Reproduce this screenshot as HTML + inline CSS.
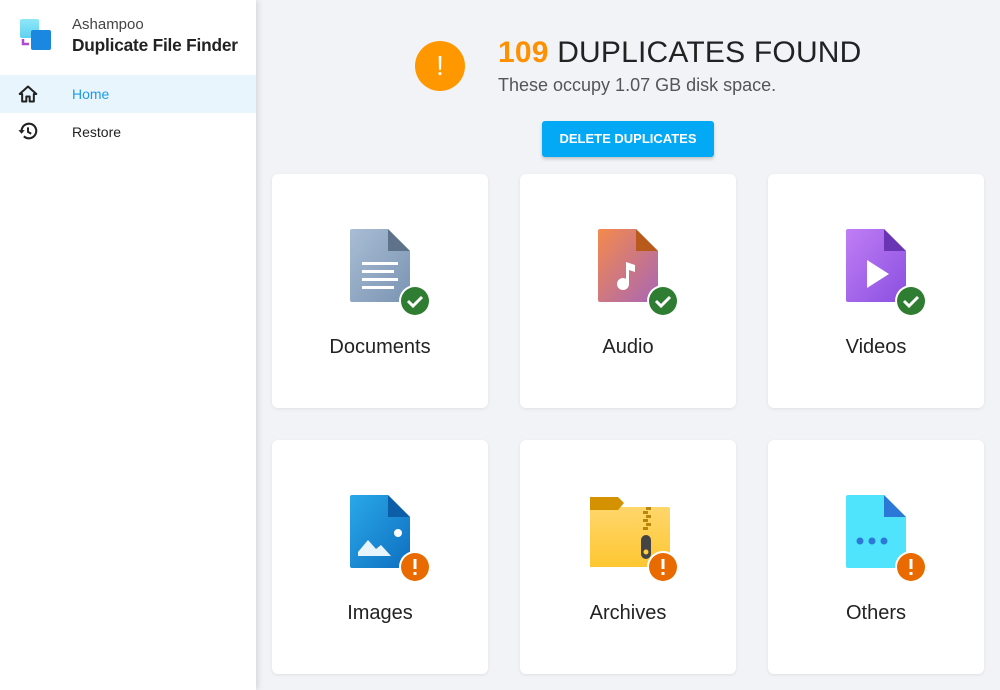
<!DOCTYPE html><html><head><meta charset="utf-8"><style>
*{margin:0;padding:0;box-sizing:border-box}
body{width:1000px;height:690px;overflow:hidden;font-family:"Liberation Sans",sans-serif;background:#f2f3f7;position:relative}
.side{position:absolute;left:0;top:0;width:256px;height:690px;background:#fff;box-shadow:2px 0 6px rgba(0,0,0,.12)}
.card{position:absolute;width:216px;height:234px;background:#fff;border-radius:6px;box-shadow:0 1px 3px rgba(0,0,0,.08)}
.card .lbl{position:absolute;left:0;right:0;top:162px;text-align:center;font-size:20px;color:#222}
.card svg{position:absolute;left:70px;top:50px}
</style></head><body>
<div class="side">
<svg style="position:absolute;left:19px;top:18px" width="34" height="34" viewBox="0 0 34 34"><defs><linearGradient id="a" x1="0" y1="0" x2="0" y2="1"><stop offset="0" stop-color="#8ee8f8"/><stop offset="1" stop-color="#5fd0f0"/></linearGradient></defs><rect x="1" y="1" width="19" height="19" rx="2" fill="url(#a)"/><rect x="12" y="12" width="20" height="20" rx="2" fill="#1a88e0"/><path d="M4 21v5h6" stroke="#b04ad0" stroke-width="2.5" fill="none"/></svg>
<div style="position:absolute;left:72px;top:16px;font-size:15px;color:#444">Ashampoo</div>
<div style="position:absolute;left:72px;top:35px;font-size:17.3px;color:#222;font-weight:bold;letter-spacing:-.2px">Duplicate File Finder</div>
<div style="position:absolute;left:0;top:75px;width:256px;height:38px;background:#e8f5fc"></div>
<svg style="position:absolute;left:18px;top:84px" width="20" height="20" viewBox="0 0 24 24"><path d="M12 3L2 12h3v9h5v-6h4v6h5v-9h3z" fill="none" stroke="#222" stroke-width="2.4" stroke-linejoin="round"/></svg>
<div style="position:absolute;left:72px;top:86px;font-size:14px;color:#1e9be8">Home</div>
<svg style="position:absolute;left:17px;top:120px" width="22" height="22" viewBox="0 0 24 24"><path d="M5 12a8 8 0 1 1 2.5 5.8" fill="none" stroke="#222" stroke-width="2.3"/><path d="M1.5 11h7l-3.5 4z" fill="#222"/><path d="M12 8v5l3.5 2" fill="none" stroke="#222" stroke-width="2.2"/></svg>
<div style="position:absolute;left:72px;top:124px;font-size:14px;color:#222">Restore</div>
</div>
<div style="position:absolute;left:415px;top:41px;width:50px;height:50px;border-radius:50%;background:#ff9800;color:#fff;font-size:28px;text-align:center;line-height:50px">!</div>
<div style="position:absolute;left:498px;top:36px;font-size:30px;color:#222;letter-spacing:.2px"><b style="color:#ff9100">109</b> DUPLICATES FOUND</div>
<div style="position:absolute;left:498px;top:75px;font-size:18px;color:#555">These occupy 1.07 GB disk space.</div>
<div style="position:absolute;left:542px;top:121px;width:172px;height:36px;background:#03a9f4;border-radius:3px;color:#fff;font-size:13px;font-weight:bold;text-align:center;line-height:36px;box-shadow:0 2px 3px rgba(0,0,0,.2)">DELETE DUPLICATES</div>

<div class="card" style="left:272px;top:174px"><svg width="90" height="95" viewBox="0 0 90 95"><defs><linearGradient id="d" x1="0" y1="0" x2="1" y2="1"><stop offset="0" stop-color="#a9bdd4"/><stop offset="1" stop-color="#7a94b3"/></linearGradient></defs><path d="M8 5h38l22 22v49a2 2 0 0 1-2 2H10a2 2 0 0 1-2-2V7a2 2 0 0 1 2-2z" fill="url(#d)"/><path d="M46 5l22 22H46z" fill="#5e738a"/><rect x="20" y="38" width="36" height="3" fill="#fff"/><rect x="20" y="46" width="32" height="3" fill="#fff"/><rect x="20" y="54" width="36" height="3" fill="#fff"/><rect x="20" y="62" width="32" height="3" fill="#fff"/><circle cx="73" cy="77" r="16" fill="#fff"/><circle cx="73" cy="77" r="14" fill="#2e7d32"/><path d="M66 77l5 5 9-9" stroke="#fff" stroke-width="3" fill="none"/></svg><div class="lbl">Documents</div></div>

<div class="card" style="left:520px;top:174px"><svg width="90" height="95" viewBox="0 0 90 95"><defs><linearGradient id="au" x1="0" y1="0" x2="1" y2="1"><stop offset="0" stop-color="#f48a4c"/><stop offset="1" stop-color="#a866b5"/></linearGradient></defs><path d="M8 5h38l22 22v49a2 2 0 0 1-2 2H10a2 2 0 0 1-2-2V7a2 2 0 0 1 2-2z" fill="url(#au)"/><path d="M46 5l22 22H46z" fill="#b85a1c"/><circle cx="33" cy="60" r="6" fill="#fff"/><path d="M36 60V38l9 3v7l-6-2v14z" fill="#fff"/><circle cx="73" cy="77" r="16" fill="#fff"/><circle cx="73" cy="77" r="14" fill="#2e7d32"/><path d="M66 77l5 5 9-9" stroke="#fff" stroke-width="3" fill="none"/></svg><div class="lbl">Audio</div></div>

<div class="card" style="left:768px;top:174px"><svg width="90" height="95" viewBox="0 0 90 95"><defs><linearGradient id="v" x1="0" y1="0" x2="1" y2="1"><stop offset="0" stop-color="#c07ef5"/><stop offset="1" stop-color="#8a4fe0"/></linearGradient></defs><path d="M8 5h38l22 22v49a2 2 0 0 1-2 2H10a2 2 0 0 1-2-2V7a2 2 0 0 1 2-2z" fill="url(#v)"/><path d="M46 5l22 22H46z" fill="#6a35b5"/><path d="M29 36l22 14-22 14z" fill="#fff"/><circle cx="73" cy="77" r="16" fill="#fff"/><circle cx="73" cy="77" r="14" fill="#2e7d32"/><path d="M66 77l5 5 9-9" stroke="#fff" stroke-width="3" fill="none"/></svg><div class="lbl">Videos</div></div>

<div class="card" style="left:272px;top:440px"><svg width="90" height="95" viewBox="0 0 90 95"><defs><linearGradient id="im" x1="0" y1="0" x2="1" y2="1"><stop offset="0" stop-color="#2aa8e8"/><stop offset="1" stop-color="#0e6fc0"/></linearGradient></defs><path d="M8 5h38l22 22v49a2 2 0 0 1-2 2H10a2 2 0 0 1-2-2V7a2 2 0 0 1 2-2z" fill="url(#im)"/><path d="M46 5l22 22H46z" fill="#0d5ea8"/><circle cx="56" cy="43" r="4" fill="#fff"/><path d="M16 66v-4l10-12 8 9 5-4 10 11z" fill="#e8f4fc"/><circle cx="73" cy="77" r="16" fill="#fff"/><circle cx="73" cy="77" r="14" fill="#e86a00"/><rect x="71.5" y="69" width="3" height="10" fill="#fff"/><rect x="71.5" y="82" width="3" height="3" fill="#fff"/></svg><div class="lbl">Images</div></div>

<div class="card" style="left:520px;top:440px"><svg width="90" height="95" viewBox="0 0 90 95"><defs><linearGradient id="ar" x1="0" y1="0" x2="0" y2="1"><stop offset="0" stop-color="#ffd66b"/><stop offset="1" stop-color="#fdc731"/></linearGradient></defs><rect x="-4" y="17" width="84" height="60" rx="2" fill="url(#ar)"/><path d="M-4 9a2 2 0 0 1 2-2h30l6 6-6 7H-4z" fill="#d49200"/><g fill="#b8860b"><rect x="56" y="17" width="5" height="3"/><rect x="53" y="21" width="5" height="3"/><rect x="56" y="25" width="5" height="3"/><rect x="53" y="29" width="5" height="3"/><rect x="56" y="33" width="5" height="3"/><rect x="53" y="37" width="5" height="3"/></g><rect x="51" y="45" width="10" height="24" rx="5" fill="#444"/><circle cx="56" cy="62" r="2.5" fill="#ffcf40"/><circle cx="73" cy="77" r="16" fill="#fff"/><circle cx="73" cy="77" r="14" fill="#e86a00"/><rect x="71.5" y="69" width="3" height="10" fill="#fff"/><rect x="71.5" y="82" width="3" height="3" fill="#fff"/></svg><div class="lbl">Archives</div></div>

<div class="card" style="left:768px;top:440px"><svg width="90" height="95" viewBox="0 0 90 95"><path d="M8 5h38l22 22v49a2 2 0 0 1-2 2H10a2 2 0 0 1-2-2V7a2 2 0 0 1 2-2z" fill="#50e3fc"/><path d="M46 5l22 22H46z" fill="#2b78d6"/><circle cx="22" cy="51" r="3.5" fill="#2b78d6"/><circle cx="34" cy="51" r="3.5" fill="#2b78d6"/><circle cx="46" cy="51" r="3.5" fill="#2b78d6"/><circle cx="73" cy="77" r="16" fill="#fff"/><circle cx="73" cy="77" r="14" fill="#e86a00"/><rect x="71.5" y="69" width="3" height="10" fill="#fff"/><rect x="71.5" y="82" width="3" height="3" fill="#fff"/></svg><div class="lbl">Others</div></div>
</body></html>
